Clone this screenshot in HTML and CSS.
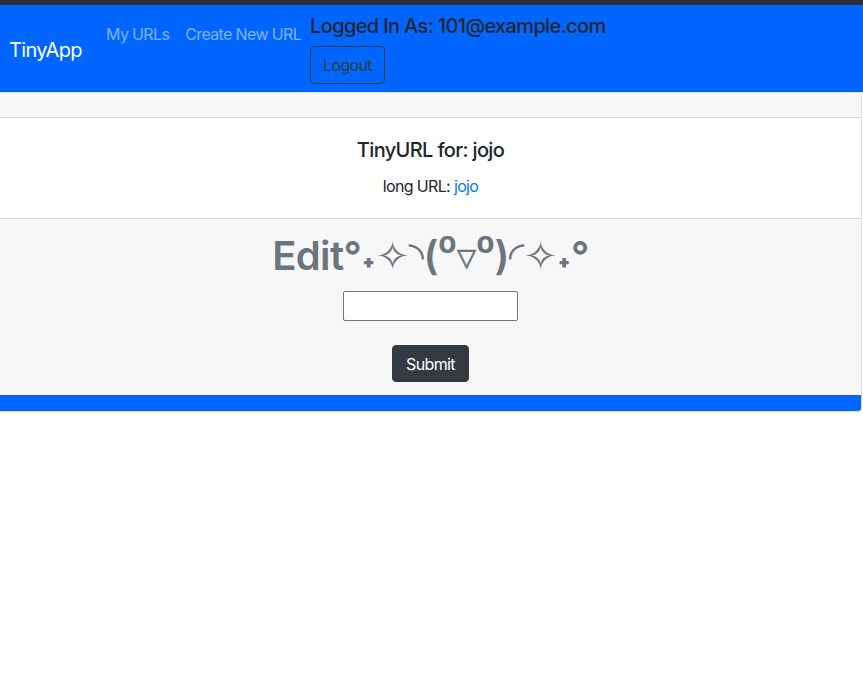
FILE: index.html
```html
<!DOCTYPE html>
<html>
<head>
<meta charset="utf-8">
<link rel="stylesheet" href="styles.css">
</head>
<body>
<div class="topline"></div>
<nav class="navbar">
  <a class="brand" href="#">TinyApp</a>
  <ul class="nav">
    <li><a class="nav-link" href="#">My URLs</a></li>
    <li><a class="nav-link" href="#">Create New URL</a></li>
    <li class="user">
      <h5 class="user-name">Logged In As: 101@example.com</h5>
      <button class="btn-logout">Logout</button>
    </li>
  </ul>
</nav>
<div class="card">
  <div class="card-header"></div>
  <div class="card-body">
    <h5 class="card-title">TinyURL for: jojo</h5>
    <p class="card-text">long URL: <a href="#">jojo</a></p>
  </div>
  <div class="card-footer">
    <h1 class="edit-title">Edit°˖✧◝(⁰▿⁰)◜✧˖°</h1>
    <form class="edit-form">
      <input type="text" class="url-input">
      <button type="button" class="btn-submit">Submit</button>
    </form>
  </div>
  <div class="card-bar"></div>
</div>
</body>
</html>
```
FILE: styles.css
```css
* { box-sizing: border-box; }
body {
  margin: 0;
  font-family: Inter, "Noto Sans", "DejaVu Sans", sans-serif;
  font-size: 16px;
  line-height: 1.5;
  letter-spacing: -0.04em;
  color: #212529;
  background: #fff;
}
.topline { height: 5px; background: #313236; }
.navbar {
  display: flex;
  align-items: center;
  background: #0066ff;
  padding: 9px 8px 7px;
  height: 87px;
}
.brand {
  color: #fff;
  font-size: 20px;
  line-height: 30px;
  text-decoration: none;
  margin-right: 16px;
  padding-left: 1px;
}
.nav {
  display: flex;
  align-items: flex-start;
  list-style: none;
  margin: 0;
  padding: 0;
  align-self: stretch;
}
.nav-link {
  display: block;
  padding: 8px 8px;
  color: rgba(255,255,255,.5);
  text-decoration: none;
  line-height: 24px;
}
.user { padding-left: 1px; }
.user-name {
  margin: 0 0 8px;
  font-size: 20px;
  font-weight: 500;
  line-height: 24px;
  color: #212529;
}
.btn-logout {
  font-family: inherit;
  letter-spacing: inherit;
  font-size: 16px;
  line-height: 24px;
  color: #343a40;
  background: transparent;
  border: 1px solid #343a40;
  border-radius: 4px;
  padding: 6px 12px;
  height: 38px;
}
.card {
  margin-right: 1px;
  border: 1px solid rgba(0,0,0,.125);
  border-left: none;
  border-radius: 0 4px 4px 0;
  text-align: center;
  overflow: hidden;
}
.card-header {
  height: 25px;
  background: #f7f7f7;
  border-bottom: 1px solid rgba(0,0,0,.125);
}
.card-body { padding: 20px; }
.card-title {
  margin: 0 0 12px;
  font-size: 20px;
  font-weight: 500;
  line-height: 24px;
}
.card-text { margin: 0; }
.card-text a { color: #007bff; text-decoration: none; }
.card-footer {
  background: #f7f7f7;
  border-top: 1px solid rgba(0,0,0,.125);
  padding: 13px 20px 13px;
}
.edit-title {
  margin: 0 0 8px;
  font-size: 40px;
  font-weight: 600;
  line-height: 48px;
  color: #6c757d;
}
.edit-form {
  display: flex;
  flex-direction: column;
  align-items: center;
  padding-top: 3px;
  gap: 24px;
}
.url-input {
  width: 175px;
  height: 30px;
  border: 1px solid #767676;
  border-radius: 2px;
  background: #fff;
}
.btn-submit {
  font-family: inherit;
  letter-spacing: inherit;
  font-size: 16px;
  line-height: 24px;
  color: #fff;
  background: #343a40;
  border: 1px solid #343a40;
  border-radius: 4px;
  padding: 6px 13px;
  height: 37px;
}
.card-bar { height: 16px; background: #0066ff; }
```
